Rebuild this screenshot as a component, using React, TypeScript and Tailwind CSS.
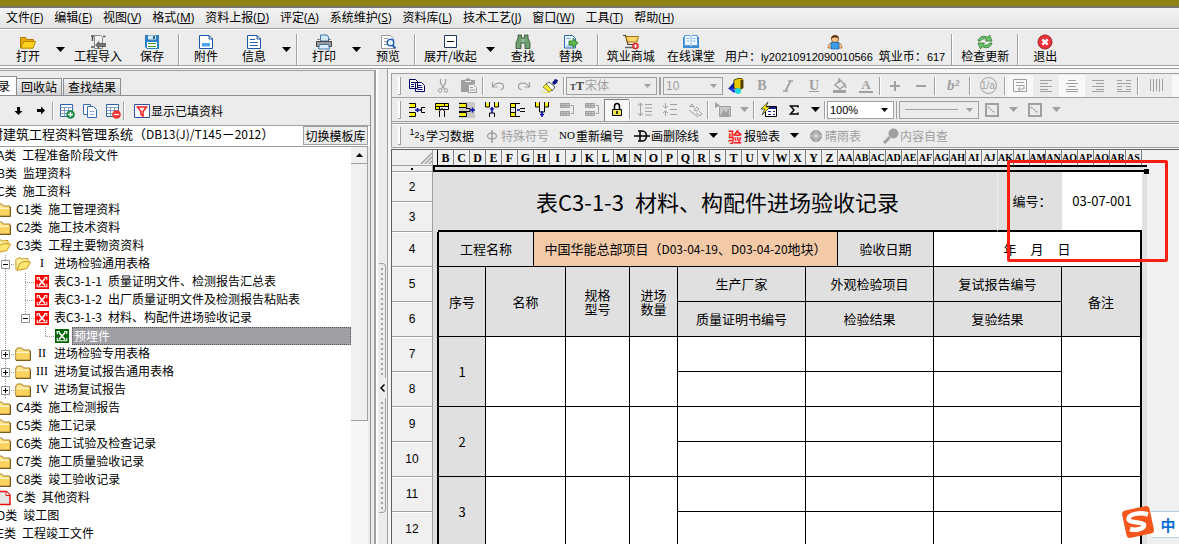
import { ReactNode } from 'react';

// ─── Menu bar ─────────────────────────────────────────────────────────────────

const MENUS: [string, string][] = [
  ['文件', 'F'],
  ['编辑', 'E'],
  ['视图', 'V'],
  ['格式', 'M'],
  ['资料上报', 'D'],
  ['评定', 'A'],
  ['系统维护', 'S'],
  ['资料库', 'L'],
  ['技术工艺', 'J'],
  ['窗口', 'W'],
  ['工具', 'T'],
  ['帮助', 'H'],
];

function MenuBar() {
  return (
    <nav className="flex h-[21px] shrink-0 items-center gap-[11px] border-b border-[#a0a0a0] bg-linear-to-b from-[#f4f4f4] to-[#e4e4e4] pl-1.5 font-['Open_Sans','Noto_Sans_CJK_SC',sans-serif]">
      {MENUS.map(([label, key]) => (
        <button key={key} className="whitespace-nowrap leading-4">
          {label}(<u>{key}</u>)
        </button>
      ))}
    </nav>
  );
}

// ─── Icons ────────────────────────────────────────────────────────────────────

function Svg({ children, className = 'size-4' }: { children: ReactNode; className?: string }) {
  return (
    <svg viewBox="0 0 16 16" fill="none" className={`shrink-0 ${className}`} aria-hidden="true">
      {children}
    </svg>
  );
}

function OpenIcon() {
  return (
    <Svg>
      <path d="M.5 14V3.500h5l1.500 2h6.500v3" fill="#e8a800" stroke="#b07c00" />
      <path d="M.8 14.200 3.500 7.500H15.500L13 14.200z" fill="#ffd21c" stroke="#b88600" />
    </Svg>
  );
}

function ImportIcon() {
  return (
    <Svg>
      <path d="M4.500 1.500h6l2 2v11h-8z" fill="#f4f4f4" stroke="#888" />
      <path d="M1 2h3M1 13h3M2.500 2v5M13 2.500h2.500" stroke="#555" strokeWidth="1.500" />
      <path d="M5.500 11 9 7.500V9.500h6.500v3H9V14.500z" fill="#777" stroke="#444" strokeWidth=".7" />
    </Svg>
  );
}

function SaveIcon() {
  return (
    <Svg>
      <path d="M1 1h14v14H3l-2-2z" fill="#2f7fc4" />
      <path d="M4 1.500h8v4H4z" fill="#d8ecf8" />
      <path d="M9 2h2v3H9z" fill="#2f6090" />
      <path d="M3 8h10v6H3z" fill="#fff" />
      <path d="M4 9.500h8M4 12.500h8" stroke="#3c9a3c" />
    </Svg>
  );
}

function DocIcon({ lines = false }: { lines?: boolean }) {
  return (
    <Svg>
      <path d="M1.500 1.500h9.500l3.500 3.500v9.500h-13z" fill="#fff" stroke="#1f55a8" />
      <path d="M11 1.500v3.500h3.500" stroke="#1f55a8" />
      {lines ? (
        <path d="M4 5.500h5M4 8.500h8M4 11.500h8" stroke="#2860b4" />
      ) : (
        <path d="M4 9h8v3.500H4z" fill="#4ca4ee" />
      )}
    </Svg>
  );
}

function PrintIcon() {
  return (
    <Svg>
      <path d="M4.500 1h6.500l1.500 2v4h-8z" fill="#cfe8fb" stroke="#4878a8" />
      <path d="M.5 7.500h15v5H.5z" fill="#999" stroke="#444" />
      <path d="M1.500 5.500h2M12.500 5.500h2" stroke="#555" />
      <path d="M3.500 10.500h9l1 4.500h-11z" fill="#dcefff" stroke="#4878a8" />
    </Svg>
  );
}

function PreviewIcon() {
  return (
    <Svg>
      <path d="M1.500 1.500h9l3 3v10h-12z" fill="#fff" stroke="#999" />
      <path d="M4 4.500h4M4 7.500h3M4 10.500h3" stroke="#999" />
      <circle cx="10.500" cy="8.500" r="3.300" fill="#e4f2ff" stroke="#2860b4" strokeWidth="1.400" />
      <path d="m12.500 11 3 3.500" stroke="#2860b4" strokeWidth="2" />
    </Svg>
  );
}

function CollapseIcon() {
  return (
    <Svg>
      <path d="M2.500 1.500h12v12h-12z" fill="#fff" stroke="#223a5c" />
      <path d="M5 7.500h7" stroke="#111" />
    </Svg>
  );
}

function FindIcon() {
  return (
    <Svg>
      <path d="M3 1h3.500v3H9.500V1H13v3l2 5v5.500h-5V9H6v5.500H1V9l2-5z" fill="#6ea072" stroke="#2e4c30" strokeWidth=".8" />
      <path d="M6.500 5h3v3h-3z" fill="#99bb99" />
    </Svg>
  );
}

function ReplaceIcon() {
  return (
    <Svg>
      <path d="M1.500 1.500h8l3 3v9.500h-11z" fill="#eaf5ff" stroke="#2a66b0" />
      <path d="M3.500 12h7M3.500 4.500h4" stroke="#6aa0d8" />
      <path d="M6 7h4V4.500L15 9l-5 4.500V11H6z" fill="#5cb84c" stroke="#246e24" strokeWidth=".8" />
    </Svg>
  );
}

function CartIcon() {
  return (
    <Svg>
      <path d="M0 1.500h2.500L5 10.500h7" stroke="#4c3a20" strokeWidth="1.200" />
      <path d="M3 2.500h12.500L14 8H4.500z" fill="#ffd66a" stroke="#a87410" />
      <path d="M2 13.500h9" stroke="#666" strokeWidth="1.500" />
      <circle cx="12.500" cy="12" r="3.300" fill="#e02424" />
      <path d="M12.500 10v4M10.500 12h4" stroke="#fff" strokeWidth="1.200" />
    </Svg>
  );
}

function BookIcon() {
  return (
    <Svg>
      <path d="M0 3h16v11H0z" fill="#3a8ad4" />
      <path d="M1.500 1.500H7l1 1 1-1h5.500v10H9l-1 1-1-1H1.500z" fill="#eef7ff" stroke="#5c9cd8" />
      <path d="M8 2.500v9M3.500 4.500h3M3.500 7h3M9.500 4.500h3M9.500 7h3" stroke="#8abce8" />
    </Svg>
  );
}

function UserIcon() {
  return (
    <Svg>
      <circle cx="8" cy="5" r="3.600" fill="#f6c48c" stroke="#7a4a1c" strokeWidth=".8" />
      <path d="M4 4.500C4 0 12 0 12 4.500 10.500 3 6 3 4 4.500z" fill="#5c3210" />
      <path d="M1 14c0-4 2-5 4-5h6c2 0 4 1 4 5z" fill="#f6c48c" stroke="#9a6428" strokeWidth=".7" />
      <path d="M4 8.500h8V15H4z" fill="#3a9cf0" stroke="#1c62a8" strokeWidth=".7" />
    </Svg>
  );
}

function RefreshIcon() {
  return (
    <Svg>
      <path d="M1 7C2 2.500 7 1 11 3.500L12.500 1 15 7H8.500L10 5.500C7 4 4.500 5 3.500 7z" fill="#6cc46c" stroke="#2c742c" strokeWidth=".8" />
      <path d="M15 9c-1 4.500-6 6-10 3.500L3.500 15 1 9h6.500L6 10.500c3 1.500 5.500.5 6.500-1.500z" fill="#6cc46c" stroke="#2c742c" strokeWidth=".8" />
    </Svg>
  );
}

function ExitIcon() {
  return (
    <Svg>
      <circle cx="8" cy="8" r="7" fill="#ee3038" stroke="#a02428" />
      <path d="m5.300 5.300 5.400 5.400M10.700 5.300l-5.400 5.400" stroke="#fff" strokeWidth="2.400" />
    </Svg>
  );
}

// ─── Main toolbar ─────────────────────────────────────────────────────────────

function BigButton({ icon, label }: { icon: ReactNode; label: string }) {
  const pad = label.length > 2 ? 'px-1.5' : 'px-3';
  return (
    <button className={`flex flex-col items-center whitespace-nowrap leading-3 ${pad}`}>
      {icon}
      {label}
    </button>
  );
}

function Arrow({ wide = false, dim = false }: { wide?: boolean; dim?: boolean }) {
  return (
    <button aria-label="更多" className={`flex shrink-0 justify-center self-center ${wide ? 'w-[18px]' : 'w-4'}`}>
      <svg viewBox="0 0 9 5" className={`h-[5px] w-[9px] ${dim ? 'fill-[#a0a0a0]' : 'fill-black'}`}>
        <path d="M0 0h9L4.500 5z" />
      </svg>
    </button>
  );
}

function Sep({ tall = false }: { tall?: boolean }) {
  return tall ? (
    <i className="mx-0.5 h-[31px] w-0.5 shrink-0 self-center border-l border-[#a0a0a0] bg-white" />
  ) : (
    <i className="mr-px h-[18px] w-0.5 shrink-0 self-center border-l border-[#a0a0a0] bg-white" />
  );
}

function MainToolbar() {
  return (
    <div className="flex h-[37px] shrink-0 items-start border-t border-b border-t-white border-b-[#a0a0a0] pt-1 pl-1">
      <BigButton icon={<OpenIcon />} label="打开" />
      <Arrow />
      <BigButton icon={<ImportIcon />} label="工程导入" />
      <BigButton icon={<SaveIcon />} label="保存" />
      <Sep tall />
      <BigButton icon={<DocIcon />} label="附件" />
      <BigButton icon={<DocIcon lines />} label="信息" />
      <Arrow />
      <Sep tall />
      <BigButton icon={<PrintIcon />} label="打印" />
      <Arrow />
      <BigButton icon={<PreviewIcon />} label="预览" />
      <Sep tall />
      <BigButton icon={<CollapseIcon />} label="展开/收起" />
      <Arrow />
      <BigButton icon={<FindIcon />} label="查找" />
      <BigButton icon={<ReplaceIcon />} label="替换" />
      <Sep tall />
      <BigButton icon={<CartIcon />} label="筑业商城" />
      <BigButton icon={<BookIcon />} label="在线课堂" />
      <div className="flex flex-col items-center px-1 leading-3 whitespace-nowrap">
        <UserIcon />
        <div className="flex gap-1.5">
          <span>
            用户：<Latin>ly20210912090010566</Latin>
          </span>
          <span>
            筑业币：<Latin>617</Latin>
          </span>
        </div>
      </div>
      <Sep tall />
      <BigButton icon={<RefreshIcon />} label="检查更新" />
      <Sep tall />
      <BigButton icon={<ExitIcon />} label="退出" />
    </div>
  );
}

function Latin({ children }: { children: ReactNode }) {
  return <span className="font-['Liberation_Sans',sans-serif] text-[11px]">{children}</span>;
}

// ─── Left pane ────────────────────────────────────────────────────────────────

type Kind = 'none' | 'closed' | 'open' | 'red' | 'green' | 'page';

type TreeItem = {
  guides: string[];
  kind: Kind;
  code?: string;
  title: string;
  selected?: boolean;
};

// guides: one letter per 20px cell; v = line, t = branch, e = end, + / - = expander, l = last expander
const TREE: TreeItem[] = [
  { guides: [], kind: 'none', code: 'A类', title: '工程准备阶段文件' },
  { guides: [], kind: 'none', code: 'B类', title: '监理资料' },
  { guides: [], kind: 'none', code: 'C类', title: '施工资料' },
  { guides: [], kind: 'closed', code: 'C1类', title: '施工管理资料' },
  { guides: [], kind: 'closed', code: 'C2类', title: '施工技术资料' },
  { guides: [], kind: 'open', code: 'C3类', title: '工程主要物资资料' },
  { guides: ['-'], kind: 'open', code: 'I', title: '进场检验通用表格' },
  { guides: ['v', 't'], kind: 'red', code: '表C3-1-1', title: '质量证明文件、检测报告汇总表' },
  { guides: ['v', 't'], kind: 'red', code: '表C3-1-2', title: '出厂质量证明文件及检测报告粘贴表' },
  { guides: ['v', 'l'], kind: 'red', code: '表C3-1-3', title: '材料、构配件进场验收记录' },
  { guides: ['v', ' ', 'e'], kind: 'green', title: '预埋件', selected: true },
  { guides: ['+'], kind: 'closed', code: 'II', title: '进场检验专用表格' },
  { guides: ['+'], kind: 'closed', code: 'III', title: '进场复试报告通用表格' },
  { guides: ['+'], kind: 'closed', code: 'IV', title: '进场复试报告' },
  { guides: [], kind: 'closed', code: 'C4类', title: '施工检测报告' },
  { guides: [], kind: 'closed', code: 'C5类', title: '施工记录' },
  { guides: [], kind: 'closed', code: 'C6类', title: '施工试验及检查记录' },
  { guides: [], kind: 'closed', code: 'C7类', title: '施工质量验收记录' },
  { guides: [], kind: 'closed', code: 'C8类', title: '竣工验收记录' },
  { guides: [], kind: 'page', code: 'C类', title: '其他资料' },
  { guides: [], kind: 'none', code: 'D类', title: '竣工图' },
  { guides: [], kind: 'none', code: 'E类', title: '工程竣工文件' },
];

function Guide({ type }: { type: string }) {
  const box = type === '+' || type === '-' || type === 'l';
  const half = type === 'e' || type === 'l';
  return (
    <svg viewBox="0 0 20 18" fill="none" className="h-[18px] w-5 shrink-0" aria-hidden="true">
      {type !== ' ' && (
        <path d={half ? 'M10.500 0v9' : 'M10.500 0v18'} stroke="#999" strokeDasharray="1 1" />
      )}
      {type !== ' ' && type !== 'v' && <path d="M10 9.500h10" stroke="#999" strokeDasharray="1 1" />}
      {box && <path d="M6.500 5.500h8v8h-8z" fill="#fff" stroke="#919191" />}
      {box && <path d="M8 9.500h5" stroke="#000" />}
      {type === '+' && <path d="M10.500 7v5" stroke="#000" />}
    </svg>
  );
}

function TreeIcon({ kind }: { kind: Kind }) {
  if (kind === 'none') return null;
  if (kind === 'red' || kind === 'green') {
    return (
      <Svg className="size-3.5">
        <path d="M0 0h16v16H0z" fill={kind === 'red' ? '#fb0000' : '#006400'} />
        <path d="M2.500 10v3.500h11V10M2.500 6V3h3M13.500 6V3h-3" stroke="#fff" strokeWidth="1.200" />
        <path d="m4.500 4 7 8M11.500 4l-7 8" stroke="#fff" strokeWidth="1.900" />
      </Svg>
    );
  }
  if (kind === 'page') {
    return (
      <Svg>
        <path d="M1 1.500h10.500L15 5v9.500H1z" fill="#e4e4e4" stroke="#e81010" strokeWidth="1.500" />
        <path d="M11 1.500V5.500h4" fill="#fff" stroke="#e81010" />
      </Svg>
    );
  }
  if (kind === 'open') {
    return (
      <Svg>
        <path d="M1 14 .8 3.500 5 1.500l2 1.500 6-.5V6" fill="#fff0a0" stroke="#c89a1c" />
        <path d="M2 14.500 4.500 7.500 9 5.500l6.500.5L12 12.500z" fill="#ffe670" stroke="#c89a1c" />
      </Svg>
    );
  }
  return (
    <Svg>
      <path d="M.8 14V4l1.500-2h4.500l1.500 2h6.500v10z" fill="#ffe48c" stroke="#a87a1c" />
      <path d="M1.500 7h13v6h-13z" fill="#fcd35c" />
      <path d="M1.500 6.500h13" stroke="#fff6cc" />
      <path d="M1 14.500h14.500V5" stroke="#7c5a18" />
    </Svg>
  );
}

function TreeRow({ item }: { item: TreeItem }) {
  const roman = item.guides.length === 1;
  return (
    <li className="flex h-[18px] items-center whitespace-nowrap">
      {item.guides.map((g, i) => (
        <Guide key={i} type={g} />
      ))}
      <TreeIcon kind={item.kind} />
      {item.selected ? (
        <span className="ml-[3px] h-[18px] flex-1 border border-dotted border-[#555] bg-[#a0a0a4] pl-px leading-[15px] text-white">
          {item.title}
        </span>
      ) : (
        <span className={`flex gap-1.5 pb-0.5 leading-4 ${item.kind === 'none' ? 'pl-0.5' : 'pl-[5px]'}`}>
          {item.code && (
            <span className={roman ? "w-3 text-center font-['Liberation_Serif',serif]" : ''}>{item.code}</span>
          )}
          <span>{item.title}</span>
        </span>
      )}
    </li>
  );
}

function GridIcon({ minus = false }: { minus?: boolean }) {
  return (
    <Svg>
      <path d="M1.500 1.500h12v12h-12z" fill="#fff" stroke="#2d62a8" />
      <path d="M1.500 4.500h12M1.500 7.500h12M1.500 10.500h12M5.500 4v9M9.500 4v9" stroke="#7c9cc4" />
      <circle cx="11.500" cy="11.500" r="4.300" fill={minus ? '#f03030' : '#1c8c48'} />
      <path d={minus ? 'M9 11.500h5' : 'M9 11.500h5M11.500 9v5'} stroke="#fff" strokeWidth="1.300" />
    </Svg>
  );
}

function LeftPane() {
  return (
    <aside className="mt-px flex w-[376px] shrink-0 flex-col border-t border-r-2 border-[#a0a0a0]">
      <div role="tablist" className="flex h-6 shrink-0 items-end overflow-hidden">
        <button role="tab" aria-selected="true" className="-ml-[18px] h-[19px] border-t border-r border-[#8c8e94] bg-white pr-1.5 pl-1 leading-4">
          目录
        </button>
        <button role="tab" className="h-[17px] border-t border-r border-[#8c8e94] bg-linear-to-b from-[#f2f2f2] to-[#d4d4d4] px-1 leading-4">
          回收站
        </button>
        <button role="tab" className="ml-px h-[17px] border-x border-t border-[#8c8e94] bg-linear-to-b from-[#f2f2f2] to-[#d4d4d4] px-1 leading-4">
          查找结果
        </button>
      </div>
      <div className="mr-[3px] flex min-h-0 flex-1 flex-col border-t border-r border-[#8c8e94]">
        <div className="flex h-[29px] shrink-0 items-center pl-[11px]">
          <button aria-label="下移" className="mr-[7px]">
            <Svg>
              <path d="M6 4h3v4h2.500L7.500 12 3.500 8H6z" fill="#000" />
            </Svg>
          </button>
          <button aria-label="右移" className="mr-0.5">
            <Svg>
              <path d="M3 6h4V3.500L11 7.500 7 11.500V9H3z" fill="#000" />
            </Svg>
          </button>
          <Sep />
          <button aria-label="新增" className="mr-[7px] ml-1"><GridIcon /></button>
          <button aria-label="复制" className="mr-[7px]">
            <Svg>
              <path d="M1.500 1.500h7v10h-7z" fill="#fff" stroke="#3c6cb0" />
              <path d="M5.500 3.500h6l3 3v8h-9z" fill="#fff" stroke="#3c6cb0" />
              <path d="M7.500 8.500h5M7.500 11.500h5" stroke="#8cacd8" />
            </Svg>
          </button>
          <button aria-label="删除" className="mr-0.5"><GridIcon minus /></button>
          <Sep />
          <button className="ml-2 flex items-center gap-px">
            <Svg>
              <path d="M.5 1.500h15v13H.5z" fill="#fff" stroke="#2d50a0" />
              <path d="M3.500 4h9L9 8.500V13l-2-1.500v-3z" stroke="#f02020" strokeWidth="1.500" />
            </Svg>
            显示已填资料
          </button>
        </div>
        <div className="flex h-[21px] shrink-0 overflow-hidden border-t border-[#a0a0a0] bg-white">
          <span className="-ml-2.5 w-[313px] text-[13px] leading-4 whitespace-nowrap">
            村建筑工程资料管理系统（<span className="text-[12px]">DB13(J)/T145</span>－
            <span className="text-[12px]">2012</span>）
          </span>
          <button className="h-[19px] w-[65px] border border-[#a0a0a0] bg-[#ececec] leading-4 whitespace-nowrap">
            切换模板库
          </button>
        </div>
        <div className="mr-0.5 flex min-h-0 flex-1 border-t border-[#a0a0a0] bg-white">
          <ul className="-ml-[5px] min-w-0 flex-1 overflow-hidden">
            {TREE.map((item) => (
              <TreeRow key={(item.code ?? '') + item.title} item={item} />
            ))}
          </ul>
          <div className="flex w-[17px] shrink-0 flex-col bg-[#f6f6f6]">
            <button aria-label="向上滚动" className="flex h-[17px] shrink-0 items-center justify-center border-r border-b border-[#a0a0a0] bg-[#f0f0f0]">
              <svg viewBox="0 0 7 4" className="h-1 w-[7px]"><path d="M0 4h7L3.500 0z" /></svg>
            </button>
            <div className="h-[257px] shrink-0 border-r border-b border-[#a0a0a0] bg-[#f0f0f0]" />
          </div>
        </div>
      </div>
    </aside>
  );
}

function Splitter() {
  return (
    <div className="flex w-[11px] shrink-0 flex-col items-center border-l-2 border-white bg-[#ececec] pt-[194px]">
      <div className="h-[115px] w-[7px] shrink-0 rounded-tr border-t border-r border-[#a0a0a0]">
        <div className="mx-auto mt-1 h-[108px] w-0.5 bg-[repeating-linear-gradient(to_bottom,#a0a0a0_0_2px,#ececec_2px_5px)]" />
      </div>
      <button aria-label="折叠" className="flex h-5 shrink-0 items-center">
        <svg viewBox="0 0 5 8" fill="none" stroke="#000" strokeWidth="1.500" className="h-2 w-[5px]">
          <path d="M4.500.5 1 4l3.500 3.500" />
        </svg>
      </button>
      <div className="h-[115px] w-[7px] shrink-0 rounded-br border-r border-b border-[#a0a0a0]">
        <div className="mx-auto mt-1 h-[108px] w-0.5 bg-[repeating-linear-gradient(to_bottom,#a0a0a0_0_2px,#ececec_2px_5px)]" />
      </div>
    </div>
  );
}

// ─── Editor toolbars ──────────────────────────────────────────────────────────

function Tool({ label, children, size = 'w-[26px]', pressed = false }: { label: string; children: ReactNode; size?: string; pressed?: boolean }) {
  return (
    <button
      aria-label={label}
      className={`flex h-[22px] shrink-0 items-center justify-center text-[#a0a0a0] ${size} ${pressed ? 'bg-[#f8f8f8]' : ''}`}
    >
      {children}
    </button>
  );
}

function Grip() {
  return <i className="mr-[3px] ml-1.5 h-[18px] w-[3px] shrink-0 border-r border-b border-[#a0a0a0] bg-white" />;
}

function Combo({ label, value, size, dim = false, pad = 'pl-0.5', children }: { label: string; value: string; size: string; dim?: boolean; pad?: string; children?: ReactNode }) {
  return (
    <div className={`relative h-[18px] shrink-0 ${size}`}>
      <select
        aria-label={label}
        disabled={dim}
        className={`block h-[18px] w-full appearance-none border border-[#a0a0a0] font-['Liberation_Sans','Noto_Sans_CJK_SC',sans-serif] leading-4 opacity-100 ${pad} ${dim ? 'bg-[#ececec] text-[#a0a0a0]' : 'bg-white text-[11px] text-black'}`}
      >
        <option>{value}</option>
      </select>
      {children}
      <svg viewBox="0 0 9 5" className={`pointer-events-none absolute top-[7px] right-1.5 h-1 w-[7px] ${dim ? 'fill-[#a0a0a0]' : 'fill-black'}`}>
        <path d="M0 0h9L4.500 5z" />
      </svg>
    </div>
  );
}

function Lines({ d }: { d: string }) {
  return (
    <Svg>
      <path d={d} stroke="#a0a0a0" />
    </Svg>
  );
}

function FormatBar() {
  return (
    <div className="flex h-6 items-center overflow-hidden border-b border-[#a0a0a0]">
      <Grip />
      <Tool label="复制">
        <Svg>
          <path d="M.5 1.500h6l2 2v7h-8zM6.500 4.500h6l3 3v6h-9z" fill="#fff" stroke="#000060" />
          <path d="M2 4.500h4M2 6.500h3M2 8.500h3M8.500 7.500h4M8.500 9.500h5M8.500 11.500h5" stroke="#000060" />
        </Svg>
      </Tool>
      <Tool label="剪切">
        <Svg>
          <path d="M5.500 1v4l4 6M10.500 1v4l-4 6" stroke="#a0a0a0" strokeWidth="1.300" />
          <circle cx="5" cy="12.500" r="1.800" stroke="#a0a0a0" />
          <circle cx="11" cy="12.500" r="1.800" stroke="#a0a0a0" />
        </Svg>
      </Tool>
      <Tool label="粘贴">
        <Svg>
          <path d="M0 2h4l1.500-1.500h3L10 2h4v4H7v8H0z" fill="#a0a0a0" />
          <path d="M4 3.500h6" stroke="#eee" />
          <path d="M7.500 6.500h5l3 3v5h-8z" fill="#eee" stroke="#a0a0a0" />
          <path d="M9 9.500h3M9 12h5" stroke="#a0a0a0" />
        </Svg>
      </Tool>
      <Sep />
      <Tool label="撤销">
        <Svg>
          <path d="M2.500 4v5h5M3 8.500C6 4 13 4 13.500 8c.2 2-1.500 3.500-3 4" stroke="#a0a0a0" strokeWidth="1.200" />
        </Svg>
      </Tool>
      <Tool label="重做">
        <Svg>
          <path d="M13.500 4v5h-5M13 8.500C10 4 3 4 2.500 8c-.2 2 1.500 3.500 3 4" stroke="#a0a0a0" strokeWidth="1.200" />
        </Svg>
      </Tool>
      <Tool label="格式刷">
        <Svg>
          <path d="m10 5 3-4 3 1-1 3-3 2z" fill="#0c1480" />
          <path d="m4 6 3-2 6 5-3 4z" fill="#fff" stroke="#555" />
          <path d="m1 9 3-3 6 6-3 2z" fill="#f8f030" stroke="#706000" strokeWidth=".7" />
          <path d="M0 14.500h8" stroke="#f0e000" strokeDasharray="1.500 1" />
        </Svg>
      </Tool>
      <Sep />
      <Combo label="字体" value="宋体" size="w-[91px]" pad="pl-[18px]" dim>
        <span className="pointer-events-none absolute top-0 left-1 flex items-baseline font-['Liberation_Serif',serif] leading-[18px] font-bold text-[#444]">
          <span className="text-[9px]">T</span>
          <span className="text-[12px]">T</span>
        </span>
      </Combo>
      <i className="mx-0.5 h-[18px] w-0.5 shrink-0 border-x border-[#a0a0a0]" />
      <Combo label="字号" value="10" size="w-[60px]" dim />
      <Tool label="颜色">
        <Svg>
          <path d="m6 2 4-1.500h4L15 2v8l-4 2-5-2z" fill="#e8c800" stroke="#605000" />
          <path d="M12.500 2H15v8l-2.500 1z" fill="#504000" />
          <path d="m0 11 6-7v8z" fill="#1020a0" />
          <path d="m1 11 4-1 3 3-2 2z" fill="#2040e0" />
          <circle cx="10" cy="13" r="3" fill="#20d8d8" />
        </Svg>
      </Tool>
      <Tool label="加粗"><b className="font-['Liberation_Serif',serif] text-[14px]">B</b></Tool>
      <Tool label="斜体">
        <Svg><path d="M8 3h5M3 13h5M10.500 3l-5 10" stroke="#a0a0a0" strokeWidth="1.700" /></Svg>
      </Tool>
      <Tool label="下划线"><u className="font-['Liberation_Serif',serif] text-[14px] font-bold">U</u></Tool>
      <Tool label="填充">
        <Svg>
          <path d="m3 7 5-5 5 5-5 4z" stroke="#a0a0a0" strokeWidth="1.500" />
          <path d="M7 0v5M12 5l2 5" stroke="#a0a0a0" strokeWidth="1.500" />
          <path d="M1 12h13v3H1z" fill="#a0a0a0" />
        </Svg>
      </Tool>
      <Tool label="字体颜色">
        <b className="border-b-2 border-[#a0a0a0] px-0.5 font-['Liberation_Serif',serif] text-[13px] leading-3">A</b>
      </Tool>
      <Sep />
      <Tool label="增大"><Svg><path d="M3 8h10M8 3v10" stroke="#a0a0a0" strokeWidth="2" /></Svg></Tool>
      <Tool label="减小"><Svg><path d="M3 8h10" stroke="#a0a0a0" strokeWidth="2" /></Svg></Tool>
      <Sep />
      <Tool label="上标" size="w-8">
        <b className="font-['Liberation_Serif',serif] text-[15px] italic">b²</b>
      </Tool>
      <Sep />
      <Tool label="分数" size="w-8">
        <span className="size-[17px] rounded-full border border-[#a0a0a0] text-center font-['Liberation_Sans',sans-serif] text-[10px] leading-[15px]">
          1/a
        </span>
      </Tool>
      <Sep />
      <Tool label="自动换行" pressed>
        <Lines d="M1.500 1.500h13v12h-13zM4 4.500h8M4 7.500h8v3.500H6M8 9l-2 2 2 2" />
      </Tool>
      <Tool label="左对齐"><Lines d="M2 2.500h12M2 5.500h8M2 8.500h12M2 11.500h8M2 13.500h12" /></Tool>
      <Tool label="居中" pressed><Lines d="M4 2.500h8M2 5.500h12M4 8.500h8M2 11.500h12M2 13.500h12" /></Tool>
      <Tool label="右对齐"><Lines d="M2 2.500h12M6 5.500h8M2 8.500h12M6 11.500h8M2 13.500h12" /></Tool>
      <Tool label="分散对齐"><Lines d="M1 2.500h5M10 2.500h5M1 5.500h14M1 8.500h5M10 8.500h5M1 11.500h5M10 11.500h5M1 13.500h14" /></Tool>
      <Sep />
      <Tool label="竖排" size="w-8"><Lines d="M2.500 1v12M5.500 1v13M8.500 1v12M11.500 1v13M14.500 1v12" /></Tool>
      <div className="h-[22px] flex-1 bg-[#f8f8f8]" />
    </div>
  );
}

// yellow/black row and column editing glyphs
const CELL_TOOLS = [
  { label: '插入行', back: '', yellow: 'M1 2h6v3H1zM1 11h6v3H1z', ink: 'M0 1.500h6.500v4H0M0 10.500h6.500v4H0M16 5.500h-3.500v5H16', blue: 'M6 8h6M8.500 6v4' },
  { label: '插入表', back: '', yellow: 'M2 2h12v3H2zM2 5h3v3H2z', ink: 'M1.500 1.500h13v6h-13zM1.500 4.500h13M5.500 4v4M10.500 1v4M5.500 15V9L8 6.500 10.500 9v6', blue: '' },
  { label: '删除行', back: 'M0 0h16v16H0z', yellow: 'M1 2h6v3H1zM1 11h6v3H1z', ink: 'M0 1.500h7.500v4H0M0 10.500h7.500v4H0M7 6.500h4v3H0', blue: 'M11 8h5M13.500 5.500v5' },
  { label: '插入列', back: '', yellow: 'M2 1h3v4H2zM11 1h3v4h-3z', ink: 'M1.500 0v5h4V0M10.500 0v5h4V0M5.500 15v-4h5v4', blue: 'M8 5v6M6 7h4' },
  { label: '左侧插入', back: '', yellow: 'M2 2h4v3H2zM2 11h4v3H2z', ink: 'M1.500 1.500h5v13h-5zM1.500 5.500h5M1.500 10.500h5M6 1.500h5M6 14.500h5M16 6.500h-5M16 9.500h-5', blue: 'M8 8h3' },
  { label: '删除列', back: '', yellow: 'M2 1h3v4H2zM11 1h3v4h-3z', ink: 'M1.500 0v5h4V0M10.500 0v5h4V0M5.500 5v5h5V5', blue: 'M8 9v6M6 12.500h4' },
];

function CellBar() {
  return (
    <div className="flex h-6 items-center overflow-hidden border-b border-[#a0a0a0]">
      <Grip />
      {CELL_TOOLS.map((tool) => (
        <Tool key={tool.label} label={tool.label} size="w-[25px]">
          <Svg>
            <path d={tool.back} fill="#c8c8c8" />
            <path d={tool.yellow} fill="#f8f000" />
            <path d={tool.ink} stroke="#000" />
            <path d={tool.blue} stroke="#1010a0" strokeWidth="1.600" />
          </Svg>
        </Tool>
      ))}
      {['合并', '拆分'].map((label) => (
        <Tool key={label} label={label} size="w-[25px]">
          <Svg>
            <path d="M1 1h10v5H1zM1 9h10v5H1z" fill="#c8c8c8" />
            <path d="M1.500 1.500h9v4h-9zM1.500 9.500h9v4h-9zM1 3.500h10M1 11.500h10M4 1v4M7 1v4M4 9v5M7 9v5M12 3.500h2.500v8H12" stroke="#a0a0a0" />
          </Svg>
        </Tool>
      ))}
      <button aria-label="锁定" className="flex h-[22px] w-[25px] shrink-0 items-center justify-center border-t border-l border-[#808080] bg-[#f8f8f8]">
        <Svg>
          <path d="M5.500 7V4.500c0-4 5-4 5 0V7" stroke="#000" strokeWidth="1.500" />
          <path d="M3.500 7.500h9v6h-9z" fill="#f0e848" stroke="#000" />
          <path d="M8 9v3" stroke="#000" strokeWidth="1.500" />
        </Svg>
      </button>
      <Sep />
      <Tool label="增大行距" size="w-[25px]"><Lines d="M3.500 1v13M1 4l2.500-3L6 4M1 11l2.500 3L6 11M8 2.500h7M8 6h7M8 9.500h7M8 13h7" /></Tool>
      <Tool label="减小行距" size="w-[25px]"><Lines d="M3.500 1v5M1 4l2.500 2L6 4M3.500 14V9M1 11l2.500-2L6 11M8 2.500h7M8 7.500h7M8 12.500h7" /></Tool>
      <Tool label="旋转文字" size="w-[25px]"><Lines d="m2 5 3-3 2 4M3.500 4.500h3M7 8l3-3 2 2-2 2zM9 11l4 3 2-2-3-3M2 8l9 7" /></Tool>
      <Sep />
      <Tool label="图片" size="w-[25px]">
        <Svg>
          <path d="m0 0 5 3.500L0 6z" fill="#a0a0a0" />
          <path d="M4.500 4.500h11v10h-11z" fill="#c8c8c8" stroke="#a0a0a0" />
          <path d="m5 14 4-6 2 3 3-5v8" fill="#a0a0a0" />
        </Svg>
      </Tool>
      <Arrow wide dim />
      <Sep />
      <Tool label="快速填表" size="w-[25px]">
        <Svg>
          <path d="M4.500 4.500h11v10h-11z" fill="#fff" stroke="#000" />
          <path d="M5 6h10" stroke="#102090" strokeWidth="2" />
          <path d="M7 9.500h3M12 9.500h2M7 12.500h3M12 12.500h2" stroke="#102090" />
          <path d="M7 0 0 7h4l-3 6 8-8H5z" fill="#f8f000" stroke="#333" strokeWidth=".8" />
        </Svg>
      </Tool>
      <Tool label="求和" size="w-[25px]">
        <Svg><path d="M12 5.500V4H4.500L8 8l-3.500 4H12v-1.500" stroke="#000" strokeWidth="1.500" /></Svg>
      </Tool>
      <Arrow wide />
      <Sep />
      <Combo label="缩放" value="100%" size="w-[67px]" />
      <i className="mx-0.5 h-[18px] w-px shrink-0 bg-[#a0a0a0]" />
      <Combo label="线型" value="" size="w-20" dim>
        <i className="pointer-events-none absolute top-2 left-1.5 h-px w-[53px] bg-[#a0a0a0]" />
      </Combo>
      {['边框', '斜线'].map((label) => (
        <span key={label} className="flex shrink-0">
          <Tool label={label} size="w-[25px]">
            <Svg>
              <path d="M2 2h12v12H2z" stroke="#a0a0a0" strokeWidth="2" />
              <path d="m4 5 7 6" stroke="#a0a0a0" strokeWidth="1.500" strokeDasharray="2 1" />
            </Svg>
          </Tool>
          <Arrow wide dim />
        </span>
      ))}
    </div>
  );
}

function TextTool({ icon, label, dim = false }: { icon: ReactNode; label: string; dim?: boolean }) {
  return (
    <button disabled={dim} className={`flex shrink-0 items-center gap-px px-[5px] ${dim ? 'text-[#a0a0a0]' : ''}`}>
      <span className="flex w-4 justify-center">{icon}</span>
      {label}
    </button>
  );
}

function DataBar() {
  return (
    <div className="mt-px flex h-[25px] items-center overflow-hidden border-y border-[#a0a0a0] shadow-[inset_0_1px_0_#fff]">
      <Grip />
      <TextTool
        label="学习数据"
        icon={
          <span className="flex items-center font-['Liberation_Sans',sans-serif] text-[9px] leading-[9px]">
            <span className="pb-1.5">1</span>
            <span>2</span>
            <span className="pt-1.5">3</span>
          </span>
        }
      />
      <TextTool
        dim
        label="特殊符号"
        icon={
          <Svg>
            <path d="M8 2v13" stroke="#a0a0a0" strokeWidth="1.600" />
            <ellipse cx="8" cy="8" rx="4.500" ry="3" stroke="#a0a0a0" strokeWidth="1.300" />
          </Svg>
        }
      />
      <TextTool
        label="重新编号"
        icon={<span className="font-['Liberation_Serif',serif] text-[11px]">NO</span>}
      />
      <TextTool
        label="画删除线"
        icon={
          <Svg>
            <path d="M0 8h16" stroke="#000" strokeWidth="1.500" />
            <path d="M4 3h4c6 0 6 10 0 10H4M6 3v10" stroke="#000" strokeWidth="1.500" />
          </Svg>
        }
      />
      <Arrow wide />
      <TextTool label="报验表" icon={<b className="text-[14px] leading-4 text-[#f81c1c]">验</b>} />
      <Arrow wide />
      <TextTool
        dim
        label="晴雨表"
        icon={
          <Svg>
            <circle cx="8" cy="8" r="6" fill="#a0a0a0" />
            <path d="M8 3v10M3 8h10M5 5l6 6M11 5l-6 6" stroke="#e8e8e8" strokeWidth=".8" />
          </Svg>
        }
      />
      <span className="ml-3 flex">
        <TextTool
          dim
          label="内容自查"
          icon={
            <Svg>
              <circle cx="10.500" cy="5.500" r="5" fill="#a0a0a0" />
              <path d="m7 9-6 6" stroke="#a0a0a0" strokeWidth="3" />
            </Svg>
          }
        />
      </span>
    </div>
  );
}

// ─── Sheet ────────────────────────────────────────────────────────────────────

// B … Z, AA … AS
const COLUMNS = Array.from({ length: 44 }, (_, i) => {
  const n = i + 1;
  return n < 26 ? String.fromCharCode(65 + n) : 'A' + String.fromCharCode(65 + n - 26);
});

const CELL = 'border-r border-b border-black p-0 text-center';
const HEAD = `${CELL} bg-[#e0e0e0] font-normal`;
const LAST = 'border-r-2 border-b border-black p-0 text-center';

function RowHead({ n }: { n: number }) {
  return (
    <th scope="row" className="border-r border-b border-[#a0a0a0] bg-[#f0f0f0] p-0 font-['Liberation_Sans',sans-serif] text-[12px] font-normal shadow-[inset_0_1px_0_#fff]">
      {n}
    </th>
  );
}

function Edge({ line = true }: { line?: boolean }) {
  return <td className={`bg-[#e0e0e0] p-0 ${line ? 'border-r border-black' : ''}`} />;
}

function Sheet() {
  return (
    <div className="relative mt-px min-h-0 flex-1 overflow-hidden border-t border-l border-[#606060] bg-[#f0f0f0]">
      <table className="w-[755px] table-fixed border-separate border-spacing-0 text-[13px] leading-[14px]">
        <colgroup>
          <col className="w-[41px]" />
          <col className="w-[5px]" />
          {COLUMNS.map((c) => (
            <col key={c} className="w-4" />
          ))}
          <col className="w-[5px]" />
        </colgroup>
        <thead>
          <tr className="h-4">
            <th className="border-r border-b border-[#a0a0a0] p-0">
              <svg viewBox="0 0 12 12" fill="none" stroke="#a0a0a0" strokeWidth="1.500" className="ml-auto size-3">
                <path d="M1 12 12 1M5 12l7-7M9 12l3-3" />
              </svg>
            </th>
            <th className="border-r border-b border-black bg-[#f0f0f0] p-0" />
            {COLUMNS.map((c) => (
              <th key={c} scope="col" className="border-r border-b border-r-[#808080] border-b-black bg-[#f0f0f0] p-0">
                <span
                  className={`flex h-[15px] justify-center overflow-hidden font-['Liberation_Serif',serif] leading-4 font-bold ${c.length > 1 ? 'text-[10px]' : 'text-[12px]'}`}
                >
                  {c}
                </span>
              </th>
            ))}
            <th className="border-b border-black p-0" />
          </tr>
        </thead>
        <tbody>
          <tr className="h-1.5">
            <th className="border-r border-b border-[#a0a0a0] p-0">
              <i className="mx-auto block size-0.5 bg-black" />
            </th>
            <td colSpan={46} className="border-t border-b-2 border-l-2 border-black bg-[#e0e0e0] p-0" />
          </tr>
          <tr className="h-[30px]">
            <RowHead n={2} />
            <Edge line={false} />
            <th colSpan={35} rowSpan={2} className="border-r border-b-2 border-r-[#f0f0f0] border-b-black bg-[#e0e0e0] p-0 text-[22px] leading-6 font-normal">
              <span className="flex justify-center gap-[11px]">
                <span>表C3-1-3</span>
                <span>材料、构配件进场验收记录</span>
              </span>
            </th>
            <th colSpan={4} rowSpan={2} className="border-b-2 border-black bg-[#e0e0e0] p-0 pl-1 font-normal">
              编号：
            </th>
            <td colSpan={5} rowSpan={2} className="border-b-2 border-black bg-white p-0 text-center">
              03-07-001
            </td>
            <Edge line={false} />
          </tr>
          <tr className="h-[30px]">
            <RowHead n={3} />
            <Edge line={false} />
            <Edge line={false} />
          </tr>
          <tr className="h-[35px] bg-white">
            <RowHead n={4} />
            <Edge />
            <th colSpan={6} className={`${HEAD} border-l`}>工程名称</th>
            <td colSpan={19} className="border-r border-b border-black bg-[#f2caa8] p-0 text-center whitespace-nowrap">
              中国华能总部项目（<span className="text-[12px]">D03-04-19</span>、
              <span className="text-[12px]">D03-04-20</span>地块）
            </td>
            <th colSpan={6} className={HEAD}>验收日期</th>
            <td colSpan={13} className={LAST}>
              <span className="flex justify-center gap-3.5">
                <span>年</span>
                <span>月</span>
                <span>日</span>
              </span>
            </td>
            <Edge line={false} />
          </tr>
          <tr className="h-[35px]">
            <RowHead n={5} />
            <Edge />
            <th colSpan={3} rowSpan={2} className={`${HEAD} border-l`}>序号</th>
            <th colSpan={5} rowSpan={2} className={HEAD}>名称</th>
            <th colSpan={4} rowSpan={2} className={HEAD}>规格<br />型号</th>
            <th colSpan={3} rowSpan={2} className={HEAD}>进场<br />数量</th>
            <th colSpan={8} className={HEAD}>生产厂家</th>
            <th colSpan={8} className={HEAD}>外观检验项目</th>
            <th colSpan={8} className={HEAD}>复试报告编号</th>
            <th colSpan={5} rowSpan={2} className={`${LAST} bg-[#e0e0e0] font-normal`}>备注</th>
            <Edge line={false} />
          </tr>
          <tr className="h-[35px]">
            <RowHead n={6} />
            <Edge />
            <th colSpan={8} className={HEAD}>质量证明书编号</th>
            <th colSpan={8} className={HEAD}>检验结果</th>
            <th colSpan={8} className={HEAD}>复验结果</th>
            <Edge line={false} />
          </tr>
          {[1, 2, 3].map((n) => [
            <tr key={`${n}a`} className="h-[35px] bg-white">
              <RowHead n={n * 2 + 5} />
              <Edge />
              <th colSpan={3} rowSpan={2} className={`${HEAD} border-l`}>{n}</th>
              <td colSpan={5} rowSpan={2} className={CELL} />
              <td colSpan={4} rowSpan={2} className={CELL} />
              <td colSpan={3} rowSpan={2} className={CELL} />
              <td colSpan={8} className={CELL} />
              <td colSpan={8} className={CELL} />
              <td colSpan={8} className={CELL} />
              <td colSpan={5} rowSpan={2} className={LAST} />
              <Edge line={false} />
            </tr>,
            <tr key={`${n}b`} className="h-[35px] bg-white">
              <RowHead n={n * 2 + 6} />
              <Edge />
              <td colSpan={8} className={CELL} />
              <td colSpan={8} className={CELL} />
              <td colSpan={8} className={CELL} />
              <Edge line={false} />
            </tr>,
          ])}
        </tbody>
      </table>
      {/* Fill handle of the selected row */}
      <i className="absolute top-[19px] left-[752px] size-[5px] bg-black" />
      {/* Marker around the form number */}
      <div className="absolute top-2.5 left-[615px] h-[102px] w-[161px] rounded-xs border-3 border-[#fc1c10]" />
    </div>
  );
}

// ─── Input method badge ───────────────────────────────────────────────────────

function ImeBadge() {
  return (
    <div className="absolute right-0 bottom-1.5 flex h-[27px] w-7 items-center justify-center border-y border-[#b8cce4] bg-white pl-1.5">
      <span className="text-[15px] leading-6 font-bold text-[#0c70d8]">中</span>
      <svg viewBox="0 0 32 32" className="absolute -top-1.5 -left-[29px] size-8" aria-hidden="true">
        <rect x="2" y="2" width="28" height="28" rx="4" fill="#f4561c" transform="rotate(-12 16 16)" />
        <path
          d="M26 8.500C18 6 7 8 6.500 12.500c-.5 5 14 3 15.500 6C23 22.500 14 25 8 23"
          fill="none"
          stroke="#fff"
          strokeWidth="4.500"
        />
      </svg>
    </div>
  );
}

export default function App() {
  return (
    <div className="relative flex h-screen flex-col overflow-hidden bg-[#ececec] font-['Noto_Sans_CJK_SC',sans-serif] text-[12px] text-black">
      <div className="h-2 shrink-0 border-b-2 border-[#78766a] bg-[#8c8216]" />
      <MenuBar />
      <MainToolbar />
      <div className="h-0.5 shrink-0 bg-white" />
      <main className="flex min-h-0 flex-1 border-t border-[#a0a0a0]">
        <LeftPane />
        <Splitter />
        <section className="flex min-w-0 flex-1 flex-col border-l border-[#a0a0a0] bg-[#f6f6f6] pt-1 pl-[3px]">
          <div className="shrink-0 border-t border-l border-[#a0a0a0] bg-[#ececec]">
            <FormatBar />
            <CellBar />
            <DataBar />
          </div>
          <Sheet />
        </section>
      </main>
      <ImeBadge />
    </div>
  );
}
